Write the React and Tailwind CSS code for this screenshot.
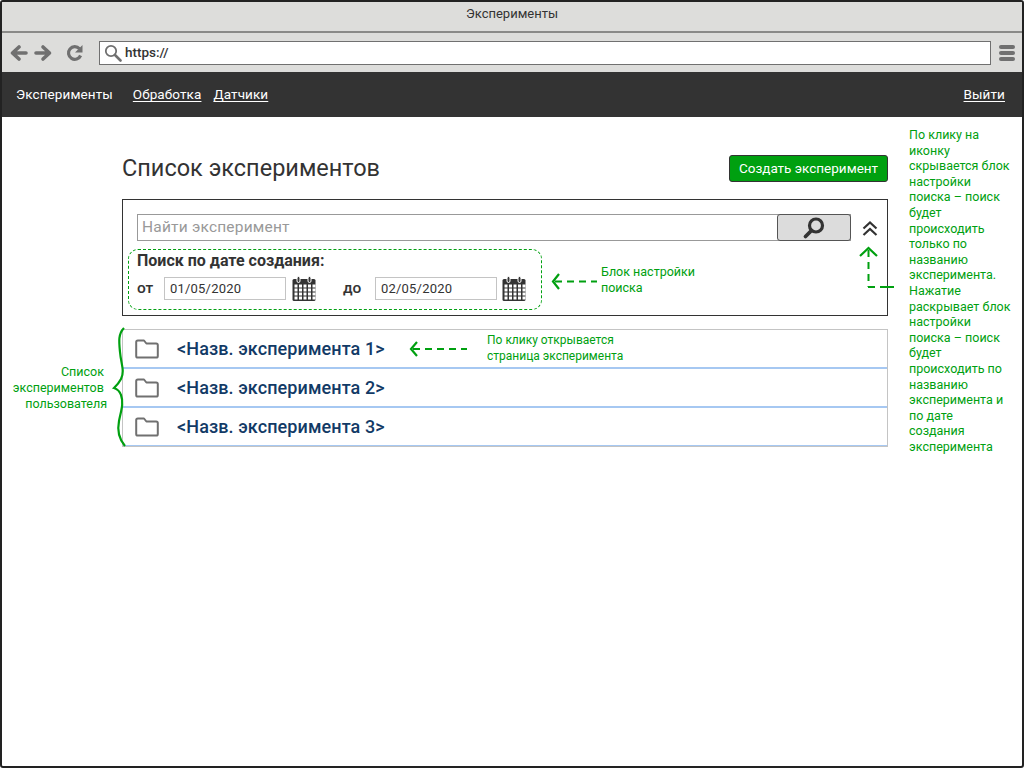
import React from "react";

const G = "#00a010";

function Calendar({ className }) {
  return (
    <svg className={className} width="24" height="25" viewBox="0 0 24 25" fill="none">
      <rect x="0.5" y="3" width="23" height="22" rx="1.5" fill="#333" />
      <rect x="5" y="0.5" width="3" height="6" rx="1.5" fill="#333" stroke="#fff" strokeWidth="1" />
      <rect x="16" y="0.5" width="3" height="6" rx="1.5" fill="#333" stroke="#fff" strokeWidth="1" />
      {[9, 13, 17, 21].map((y) =>
        [2.5, 7, 11.5, 16, 20.5].slice(0, 5).map((x) => (
          <rect key={x + "-" + y} x={x} y={y - 0.5} width="3" height="3" fill="#fff" />
        ))
      )}
    </svg>
  );
}

function Folder() {
  return (
    <svg width="24" height="20" viewBox="0 0 24 20" fill="none">
      <path
        d="M2.8 1.5h6.2l2.4 3h9.8a1.6 1.6 0 0 1 1.6 1.6v10.8a1.6 1.6 0 0 1-1.6 1.6H2.8a1.6 1.6 0 0 1-1.6-1.6V3.1a1.6 1.6 0 0 1 1.6-1.6z"
        stroke="#707070"
        strokeWidth="2"
        strokeLinejoin="round"
      />
    </svg>
  );
}

function Row({ children }) {
  return (
    <div className="h-[39px] flex items-center pl-[12px] border-b-2 border-[#a6c8f2] last:border-b last:h-[38px]">
      <Folder />
      <span className="ml-[18px] text-[18px] text-[#123a66] tracking-[0.1px] font-medium">{children}</span>
    </div>
  );
}

export default function App() {
  return (
    <div className="relative w-[1024px] h-[768px] bg-white border-2 border-[#222] rounded-[3px] overflow-hidden font-['Roboto',sans-serif] text-[#333]">
      {/* Title */}
      <div className="h-[31px] bg-[#dddddb] border-b-2 border-[#8a8a88] flex items-center justify-center text-[13px] text-[#333] pb-[5px]">
        Эксперименты
      </div>
      {/* Toolbar */}
      <div className="h-[39px] bg-[#dddddb] flex items-center pl-[8px] pr-[7px]">
        <svg width="62" height="18" viewBox="0 0 62 18" fill="none" stroke="#707070" strokeWidth="3.6" strokeLinecap="round" strokeLinejoin="round">
          <path d="M16 9H3M9 3L2.5 9 9 15" />
          <path d="M26 9h13M33 3l6.500 6L33 15" />
          <path d="M69 9" />
          <path d="M0 0" stroke="none" />
        </svg>
        <svg className="ml-[-6px]" width="18" height="18" viewBox="0 0 18 18" fill="none">
          <path d="M14.600 11.500A6.300 6.300 0 1 1 13.500 4.800" stroke="#707070" strokeWidth="3.200" />
          <path d="M16.500 1v7.500H9z" fill="#707070" />
        </svg>
        <div className="ml-[15px] flex-1 h-[24px] bg-white border border-[#707070] flex items-center pl-[4px]">
          <svg width="18" height="18" viewBox="0 0 18 18" fill="none" stroke="#707070">
            <circle cx="7" cy="7" r="5.200" strokeWidth="1.800" />
            <path d="M11 11l5.500 5.500" strokeWidth="2.600" strokeLinecap="round" />
          </svg>
          <span className="ml-[3px] text-[13.5px] font-medium text-[#333]">https://</span>
        </div>
        <div className="ml-[8px] flex flex-col gap-[2px]">
          <div className="w-[16px] h-[4px] rounded-full bg-[#707070]" />
          <div className="w-[16px] h-[4px] rounded-full bg-[#707070]" />
          <div className="w-[16px] h-[4px] rounded-full bg-[#707070]" />
        </div>
      </div>
      {/* Nav */}
      <div className="h-[45px] bg-[#333] flex items-center pl-[14px] pr-[17px] text-[13.5px] text-white tracking-[0.1px]">
        <span>Эксперименты</span>
        <a className="ml-[20px] underline underline-offset-2">Обработка</a>
        <a className="ml-[12px] underline underline-offset-2">Датчики</a>
        <a className="ml-auto underline underline-offset-2">Выйти</a>
      </div>

      {/* Main */}
      <div className="ml-[120px] w-[766px]">
        <div className="h-[82px] pt-[38px] flex items-start justify-between">
          <h1 className="text-[23.5px] leading-[28px] mt-[-1px]">Список экспериментов</h1>
          <button className="w-[159px] h-[27px] bg-[#00a010] border border-[#333] rounded-[3px] text-white text-[13.5px]">
            Создать эксперимент
          </button>
        </div>
        <div className="h-[117px] border border-[#333] relative pt-[14px] pl-[14px]">
          <div className="w-[714px] h-[27px] border border-[#999] flex items-center justify-between">
            <span className="ml-[4px] text-[15.5px] text-[#999] tracking-[0.2px]">Найти эксперимент</span>
            <div className="w-[74px] h-[27px] mr-[-1px] bg-[#dcdcdc] border border-[#555] rounded-[3px] flex items-center justify-center">
              <svg width="24" height="24" viewBox="0 0 24 24" fill="none" stroke="#333">
                <circle cx="14" cy="9.500" r="6.500" strokeWidth="3.200" />
                <path d="M9.500 14.500L3.500 20.500" strokeWidth="3.800" strokeLinecap="round" />
              </svg>
            </div>
          </div>
          <svg className="absolute left-[739px] top-[21px]" width="16" height="16" viewBox="0 0 16 16" fill="none" stroke="#333" strokeWidth="2.200">
            <path d="M1.500 7.500L8 1.500l6.500 6M1.500 14L8 8l6.500 6" />
          </svg>
          <div className="ml-[-9px] mt-[8px] w-[414px] h-[61px] border border-dashed border-[#00a010] rounded-[10px] pl-[8px] pt-[1px]">
            <div className="text-[16px] leading-[20px] font-bold text-[#333]">Поиск по дате создания:</div>
            <div className="mt-[5px] flex items-center text-[15px] font-medium text-[#333]">
              <span className="w-[27px] text-[15.5px]">от</span>
              <div className="w-[122px] h-[23px] border border-[#c4c4c4] flex items-center pl-[5px] text-[13px] font-normal tracking-[0.2px]">01/05/2020</div>
              <Calendar className="ml-[6px]" />
              <span className="ml-[27px] w-[32px] text-[15.5px]">до</span>
              <div className="w-[122px] h-[23px] border border-[#c4c4c4] flex items-center pl-[5px] text-[13px] font-normal tracking-[0.2px]">02/05/2020</div>
              <Calendar className="ml-[5px]" />
            </div>
          </div>
        </div>
        <div className="mt-[13px] border-x border-t border-[#c4c4c4] border-b">
          <Row>&lt;Назв. эксперимента 1&gt;</Row>
          <Row>&lt;Назв. эксперимента 2&gt;</Row>
          <Row>&lt;Назв. эксперимента 3&gt;</Row>
        </div>
      </div>

      {/* Annotations */}
      <svg className="absolute left-[0px] top-[0px] pointer-events-none" width="1020" height="764" fill="none" stroke={G}>
        {/* search block arrow */}
        <path d="M557 272l-6 7.500 6 7.500" strokeWidth="2.200" />
        <path d="M553 279.500h42" strokeWidth="2" strokeDasharray="7 5" />
        {/* list arrow */}
        <path d="M415 340l-6 7 6 7" strokeWidth="2.200" />
        <path d="M411 347h54" strokeWidth="2" strokeDasharray="7 5" />
        {/* up arrow */}
        <path d="M858 254l8.500-8 8.500 8" strokeWidth="2.200" />
        <path d="M866.500 248v37" strokeWidth="2" strokeDasharray="7 5" />
        <path d="M866 285h30" strokeWidth="2" strokeDasharray="7 5 14 5" />
        {/* brace */}
        <path
          d="M122 326c-6 6-5 14-4 24 1 12 5 19 1 27-2 4-5 7-7 9 3 1 6 4 7 7 3 8 0 16-2 26-2 10 0 18 6 25"
          strokeWidth="2.200"
        />
      </svg>
      <div className="absolute left-[474px] top-[330px] w-[170px] text-[12px] leading-[16px] text-[#00a010] pl-[11px]">
        По клику открывается<br />страница эксперимента
      </div>
      <div className="absolute left-[599px] top-[262px] text-[12.5px] leading-[16px] text-[#00a010]">
        Блок настройки<br />поиска
      </div>
      <div className="absolute left-[8px] top-[362px] w-[97px] text-right text-[12.500px] leading-[16px] text-[#00a010]">
        Список&nbsp;<br />экспериментов&nbsp;<br />пользователя
      </div>
      <div className="absolute left-[907px] top-[125px] w-[112px] text-[12.500px] leading-[15.600px] text-[#00a010]">
        По клику на<br />иконку<br />скрывается блок<br />настройки<br />поиска – поиск<br />будет<br />происходить<br />только по<br />названию<br />эксперимента.<br />Нажатие<br />раскрывает блок<br />настройки<br />поиска – поиск<br />будет<br />происходить по<br />названию<br />эксперимента и<br />по дате<br />создания<br />эксперимента
      </div>
    </div>
  );
}
